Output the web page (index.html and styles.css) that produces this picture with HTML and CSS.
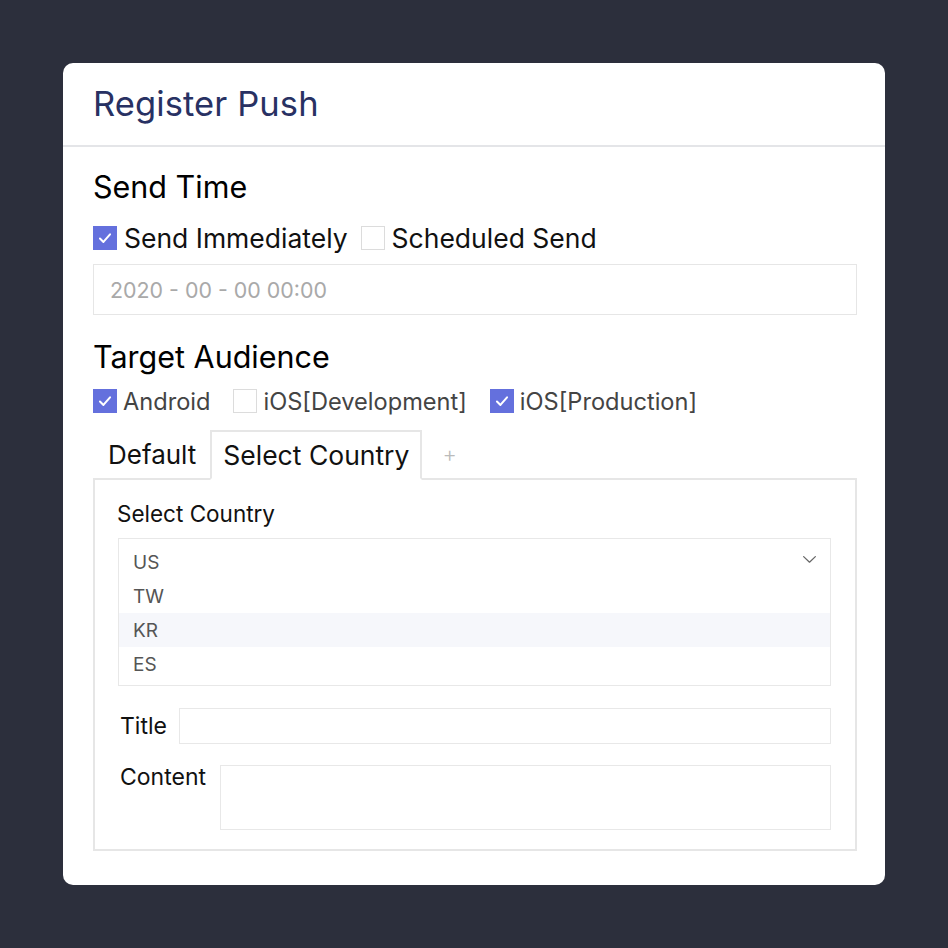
FILE: index.html
```html
<!DOCTYPE html>
<html>
<head>
<meta charset="utf-8">
<link rel="stylesheet" href="styles.css">
</head>
<body>
<div class="card">
  <div class="card-header"><h1 class="title">Register Push</h1></div>
  <div class="card-body">
    <h2 class="section-title">Send Time</h2>
    <div class="check-row">
      <label class="check"><span class="box checked"><svg viewBox="0 0 24 24"><path d="M6.5 12.5l3.8 3.8 7.2-8.3" fill="none" stroke="#fff" stroke-width="2.2" stroke-linecap="round" stroke-linejoin="round"/></svg></span><span class="check-text">Send Immediately</span></label>
      <label class="check"><span class="box"></span><span class="check-text">Scheduled Send</span></label>
    </div>
    <div class="date-input">2020 - 00 - 00 00:00</div>

    <h2 class="section-title audience">Target Audience</h2>
    <div class="check-row small">
      <label class="check"><span class="box checked"><svg viewBox="0 0 24 24"><path d="M6.5 12.5l3.8 3.8 7.2-8.3" fill="none" stroke="#fff" stroke-width="2.2" stroke-linecap="round" stroke-linejoin="round"/></svg></span><span class="check-text">Android</span></label>
      <label class="check"><span class="box"></span><span class="check-text">iOS[Development]</span></label>
      <label class="check"><span class="box checked"><svg viewBox="0 0 24 24"><path d="M6.5 12.5l3.8 3.8 7.2-8.3" fill="none" stroke="#fff" stroke-width="2.2" stroke-linecap="round" stroke-linejoin="round"/></svg></span><span class="check-text">iOS[Production]</span></label>
    </div>

    <div class="tabs">
      <div class="tab tab-default">Default</div>
      <div class="tab active">Select Country</div>
      <div class="tab-add">+</div>
    </div>
    <div class="tab-panel">
      <div class="field-label">Select Country</div>
      <div class="select-list">
        <div class="option">US</div>
        <div class="option">TW</div>
        <div class="option hover">KR</div>
        <div class="option">ES</div>
        <svg class="chevron" viewBox="0 0 16 10"><path d="M1.5 1.8L8 8l6.5-6.2" fill="none" stroke="#666" stroke-width="1.4" stroke-linecap="round" stroke-linejoin="round"/></svg>
      </div>
      <div class="form-row title-row">
        <span class="row-label">Title</span>
        <div class="text-input"></div>
      </div>
      <div class="form-row content-row">
        <span class="row-label">Content</span>
        <div class="text-area"></div>
      </div>
    </div>
  </div>
</div>
</body>
</html>
```

FILE: styles.css
```css
* { box-sizing: border-box; }
html, body { margin: 0; padding: 0; }
body {
  background: #2c2f3c;
  font-family: Inter, "Noto Sans", "Liberation Sans", sans-serif;
  padding: 63px;
  width: 948px;
  height: 948px;
}
.card {
  width: 822px;
  height: 822px;
  background: #fff;
  border-radius: 10px;
  overflow: hidden;
}
.card-header {
  height: 84px;
  border-bottom: 2px solid #e4e5e8;
  display: flex;
  align-items: center;
  padding-left: 30px;
}
.title {
  margin: 0;
  font-size: 34.5px;
  font-weight: 400;
  color: #283163;
  line-height: 40px;
  letter-spacing: 0.1px;
}
.card-body {
  padding: 0 28px 0 30px;
}
.section-title {
  margin: 22px 0 0;
  font-size: 30.5px;
  font-weight: 400;
  line-height: 36px;
  color: #000;
}
.section-title.audience { margin-top: 24px; }
.check-row {
  display: flex;
  align-items: center;
  gap: 13px;
  margin-top: 18px;
  height: 30px;
}
.check-row.small {
  margin-top: 11px;
  gap: 23px;
}
.check {
  display: flex;
  align-items: center;
  gap: 7px;
  font-size: 26.5px;
  color: #111;
}
.check-row.small .check { color: #444; font-size: 23.6px; gap: 6px; }
.box {
  width: 24px;
  height: 24px;
  border: 1.5px solid #dcdcdc;
  background: #fff;
  display: inline-block;
  flex: none;
}
.box.checked {
  background: #6470dd;
  border-color: #6470dd;
}
.box svg { width: 100%; height: 100%; display: block; }
.date-input {
  margin-top: 11px;
  height: 51px;
  border: 1.5px solid #e6e6e6;
  padding-left: 16px;
  font-size: 21.4px;
  color: #a9a9a9;
  display: flex;
  align-items: center;
}
.tabs {
  margin-top: 13px;
  display: flex;
  align-items: flex-end;
  height: 50px;
}
.tab {
  height: 50px;
  display: flex;
  align-items: center;
  font-size: 26.5px;
  color: #111;
  padding: 0 11px;
}
.tab-default { padding: 0 14px 0 15px; font-size: 26px; }
.tab.active {
  border: 2px solid #e6e6e6;
  border-bottom: 2px solid #fff;
  position: relative;
  z-index: 1;
  margin-bottom: -1px;
}
.tab-add {
  height: 50px;
  display: flex;
  align-items: center;
  padding-left: 20px;
  font-size: 22px;
  color: #bbb;
  font-weight: 300;
}
.tab-panel {
  border: 2px solid #e6e6e6;
  margin-top: -1px;
  height: 373px;
  padding: 20px 24px 0 23px;
}
.field-label {
  font-size: 22.5px;
  line-height: 28px;
  color: #111;
  margin-left: -1px;
}
.select-list {
  margin-top: 10px;
  border: 1.5px solid #e8e8e8;
  height: 148px;
  padding: 6px 0 4px;
  position: relative;
}
.option {
  height: 34px;
  line-height: 36px;
  padding-left: 14px;
  font-size: 19px;
  color: #555;
}
.option.hover { background: #f6f7fb; }
.chevron {
  position: absolute;
  right: 13px;
  top: 16px;
  width: 15px;
  height: 9px;
}
.form-row {
  display: flex;
  gap: 12px;
  padding-left: 2px;
}
.title-row {
  margin-top: 22px;
  align-items: center;
}
.content-row {
  margin-top: 21px;
  align-items: flex-start;
  gap: 14px;
}
.row-label {
  font-size: 23px;
  color: #111;
  line-height: 28px;
}
.content-row .row-label { margin-top: -2px; }
.text-input {
  flex: 1;
  height: 36px;
  border: 1.5px solid #e8e8e8;
}
.text-area {
  flex: 1;
  height: 65px;
  border: 1.5px solid #e8e8e8;
}
```
